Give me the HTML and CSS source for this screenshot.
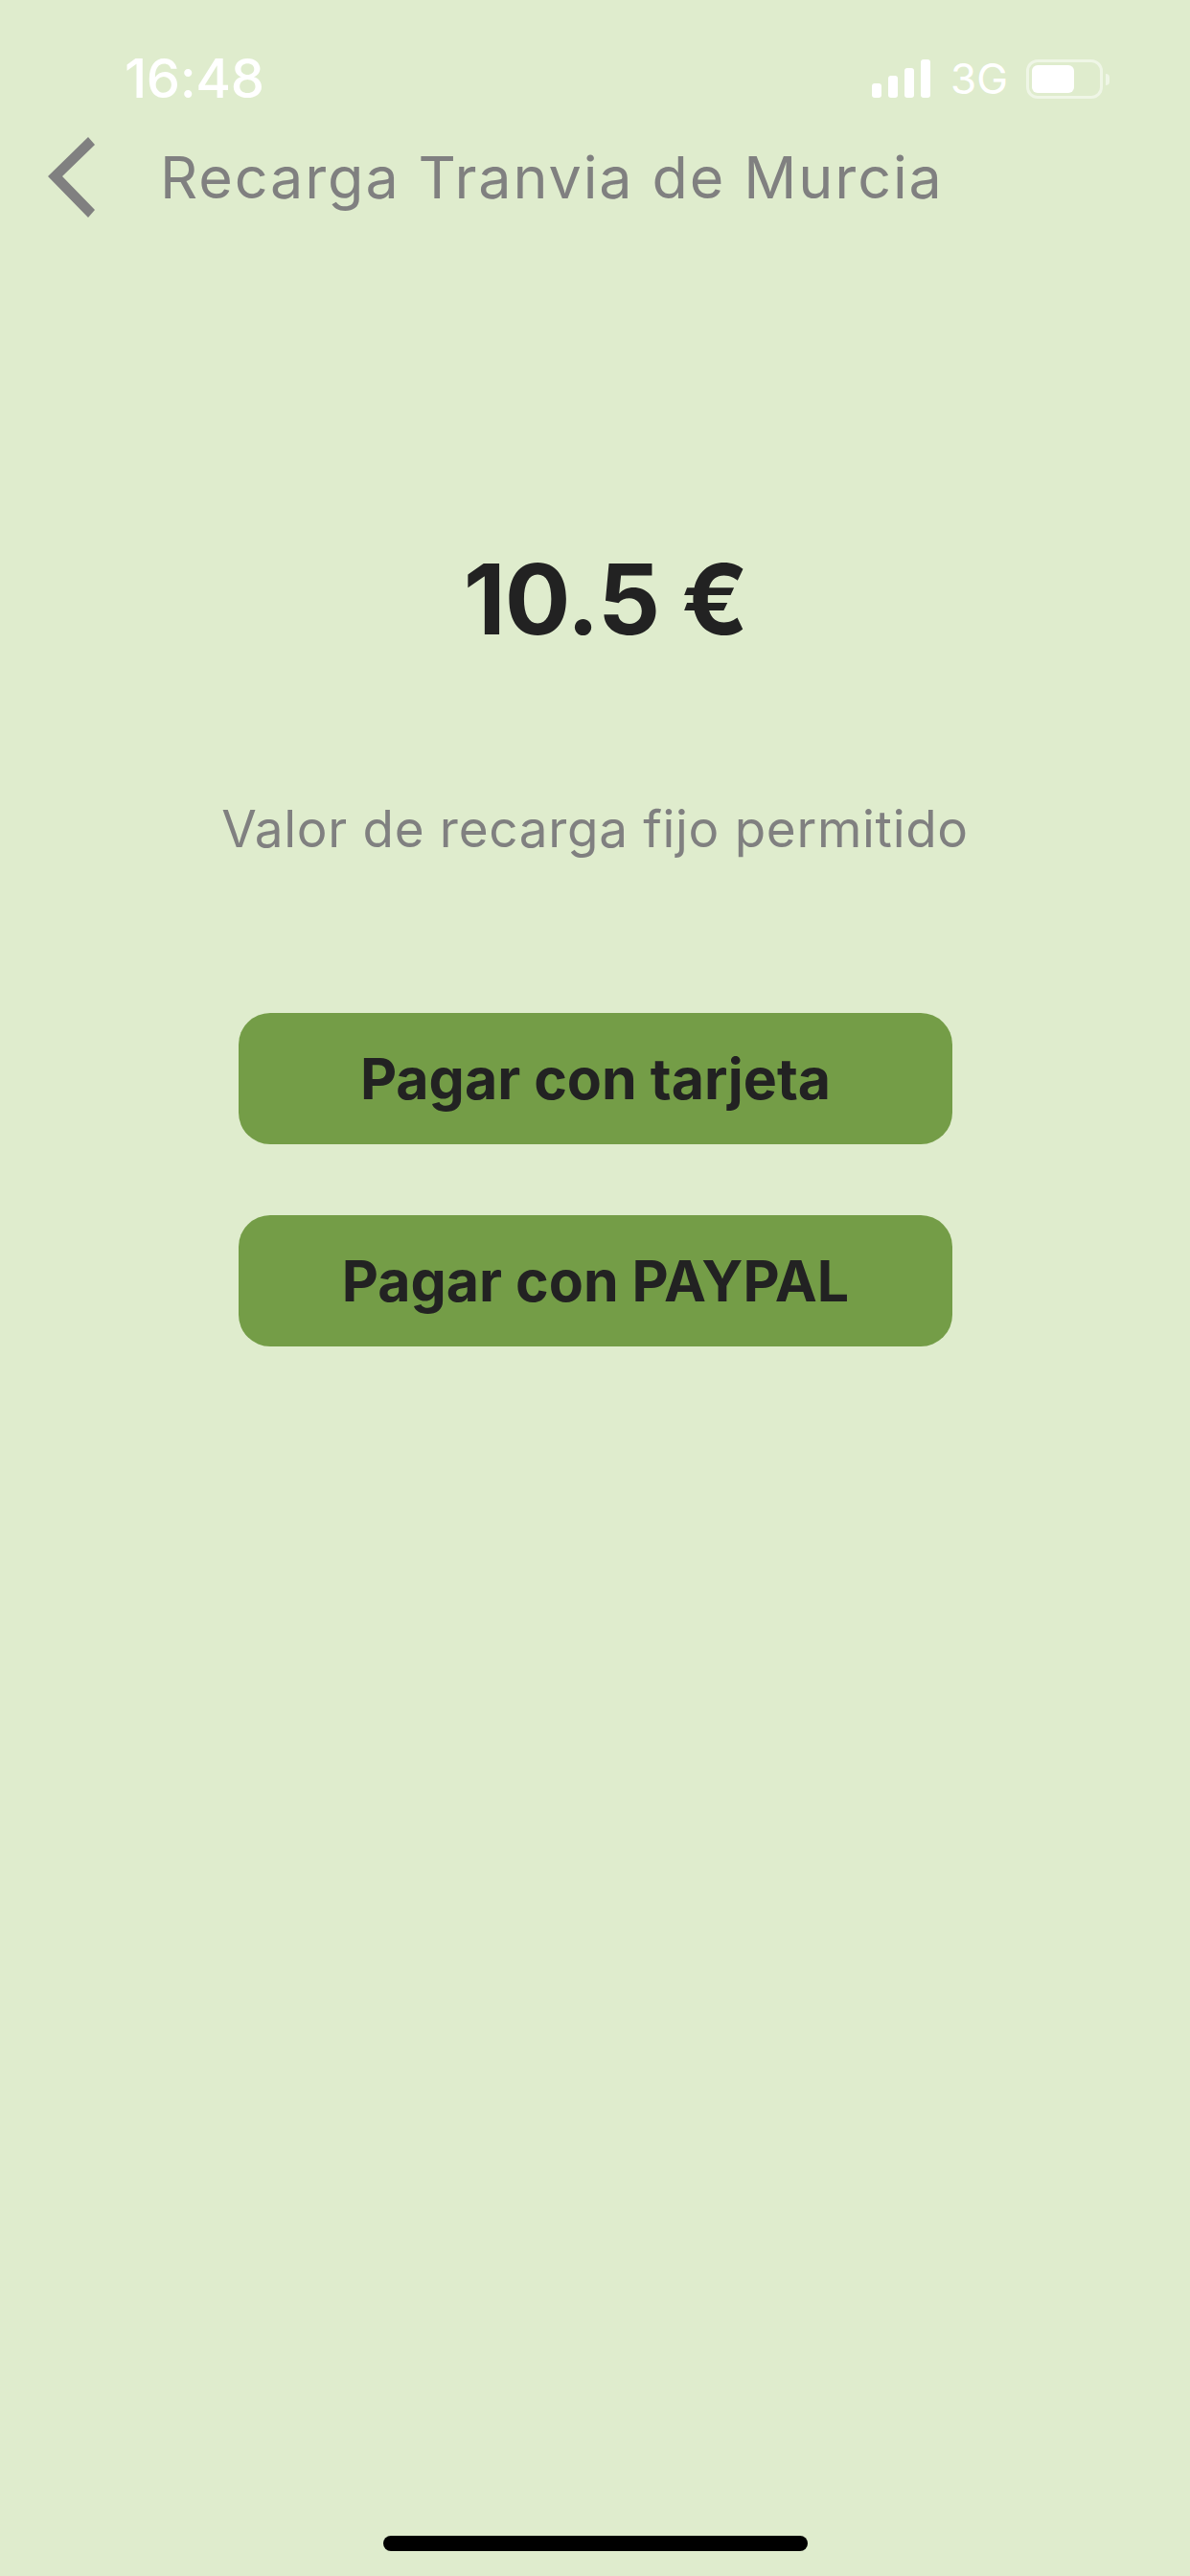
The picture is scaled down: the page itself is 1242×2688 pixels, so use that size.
FILE: index.html
```html
<!DOCTYPE html>
<html lang="es">
<head>
    <meta charset="UTF-8">
    <meta name="viewport" content="width=device-width, initial-scale=1.0">
    <title>Recarga Tranvia de Murcia</title>
    <link rel="stylesheet" href="styles.css">
</head>
<body>
    <div class="screen">
        <div class="status-bar">
            <div class="status-time">16:48</div>
            <div class="status-icons">
                <div class="signal">
                    <div class="signal-bar bar-1"></div>
                    <div class="signal-bar bar-2"></div>
                    <div class="signal-bar bar-3"></div>
                    <div class="signal-bar bar-4"></div>
                </div>
                <div class="network">3G</div>
                <div class="battery">
                    <div class="battery-body"><div class="battery-level"></div></div>
                    <div class="battery-tip"></div>
                </div>
            </div>
        </div>

        <div class="header">
            <svg class="back-icon" width="49" height="84" viewBox="50 143 49 84">
                <polygon points="92,143 99,151 65,184 99,219 92,227 50,184" fill="#808080"/>
            </svg>
            <div class="header-title">Recarga Tranvia de Murcia</div>
        </div>

        <div class="amount">10.5 €</div>
        <div class="amount-note">Valor de recarga fijo permitido</div>

        <div class="actions">
            <div class="pay-button">Pagar con tarjeta</div>
            <div class="pay-button">Pagar con PAYPAL</div>
        </div>

        <div class="home-bar"></div>
    </div>
</body>
</html>
```

FILE: styles.css
```css
body {
    margin: 0;
    background-color: #dfeccd;
    font-family: Inter, "Liberation Sans", sans-serif;
}
.screen {
    display: flex;
    flex-direction: column;
    height: 2688px;
    overflow: hidden;
}
.status-bar {
    display: flex;
    justify-content: space-between;
    align-items: center;
    height: 41px;
    margin-top: 62px;
    padding: 0 84px 0 130px;
    color: #fff;
}
.status-time {
    font-size: 56px;
    font-weight: 500;
    letter-spacing: -0.4px;
    line-height: 41px;
}
.status-icons {
    display: flex;
    align-items: center;
}
.signal {
    display: flex;
    align-items: flex-end;
    gap: 7px;
    height: 41px;
}
.signal-bar {
    width: 10px;
    background-color: #fff;
    border-radius: 3px;
    margin-bottom: 1px;
}
.bar-1 { height: 15px; }
.bar-2 { height: 23px; }
.bar-3 { height: 31px; }
.bar-4 { height: 40px; }
.network {
    margin-left: 21px;
    font-size: 44px;
    line-height: 41px;
    width: 58px;
}
.battery {
    display: flex;
    align-items: center;
    margin-left: 21px;
}
.battery-body {
    box-sizing: border-box;
    width: 80px;
    height: 41px;
    padding: 3px;
    border: 3px solid rgba(255,255,255,0.5);
    border-radius: 12px;
}
.battery-level {
    width: 44px;
    height: 29px;
    background-color: #fff;
    border-radius: 6px;
}
.battery-tip {
    width: 4px;
    height: 12px;
    margin-left: 3px;
    background-color: rgba(255,255,255,0.5);
    border-radius: 0 6px 6px 0;
}
.header {
    display: flex;
    align-items: center;
    height: 84px;
    margin-top: 40px;
    padding-left: 50px;
}
.header-title {
    margin-left: 68px;
    font-size: 61px;
    font-weight: 400;
    letter-spacing: 1.9px;
    color: #808080;
    line-height: 82px;
    white-space: nowrap;
}
.amount {
    margin-top: 348px;
    padding-left: 22px;
    text-align: center;
    font-size: 102px;
    font-weight: 700;
    letter-spacing: -1px;
    line-height: 100px;
    color: #222;
}
.amount-note {
    margin-top: 160px;
    text-align: center;
    font-size: 53px;
    font-weight: 400;
    letter-spacing: 0.7px;
    line-height: 60px;
    color: #808080;
}
.actions {
    display: flex;
    flex-direction: column;
    gap: 74px;
    width: 745px;
    margin: 162px 0 0 249px;
}
.pay-button {
    display: flex;
    justify-content: center;
    align-items: center;
    height: 137px;
    background-color: #749d47;
    border-radius: 33px;
    font-size: 59px;
    font-weight: 700;
    color: #222;
}
.home-bar {
    width: 443px;
    height: 16px;
    margin: auto 0 26px 400px;
    background-color: #000;
    border-radius: 8px;
}
```
